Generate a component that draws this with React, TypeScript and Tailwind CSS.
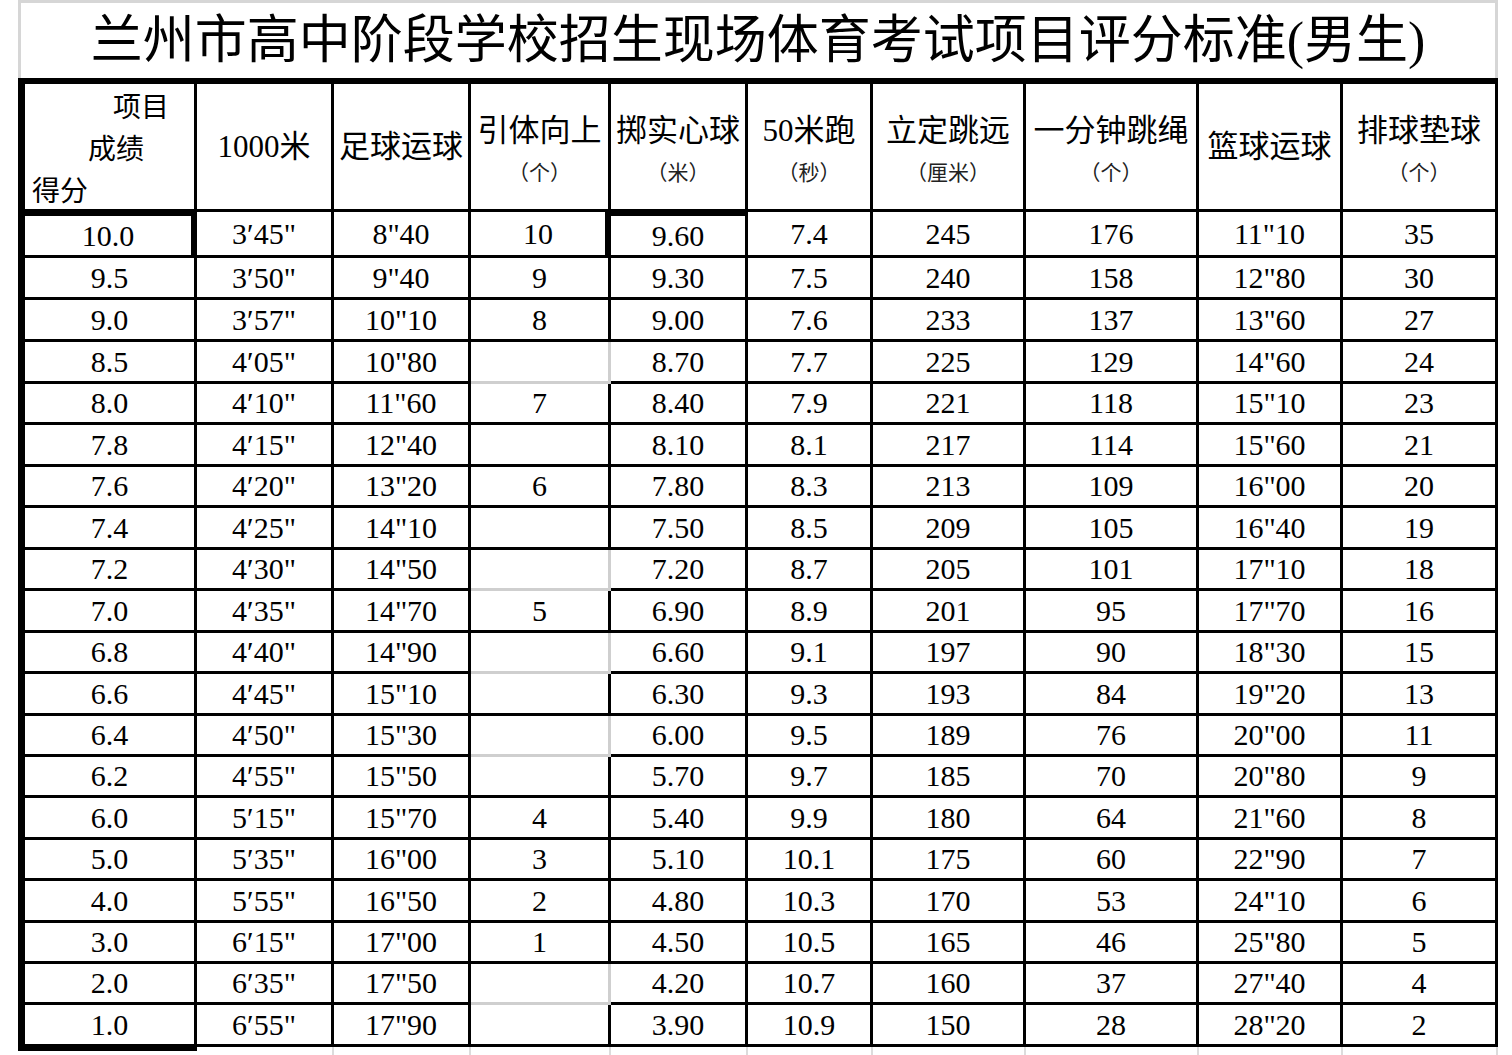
import React from 'react'
import clsx from 'clsx'

const colW = [
  'w-[172px]', 'w-[137px]', 'w-[137px]', 'w-[140px]', 'w-[137px]',
  'w-[125px]', 'w-[153px]', 'w-[173px]', 'w-[144px]', 'w-[155px]',
]

// heights of rows 9.5 ... 1.0
const rowH = [
  'h-[42px]', 'h-[42px]', 'h-[42px]', 'h-[41px]', 'h-[42px]', 'h-[41px]', 'h-[42px]',
  'h-[41px]', 'h-[42px]', 'h-[41px]', 'h-[42px]', 'h-[41px]', 'h-[41px]', 'h-[42px]',
  'h-[41px]', 'h-[42px]', 'h-[41px]', 'h-[41px]', 'h-[42px]',
]

// rows where the empty 引体向上 cell shows the light grid line
const greyRows = [3, 8, 10, 12, 18]

const heads: { main: string; sub?: string }[] = [
  { main: '1000米' },
  { main: '足球运球' },
  { main: '引体向上', sub: '（个）' },
  { main: '掷实心球', sub: '（米）' },
  { main: '50米跑', sub: '（秒）' },
  { main: '立定跳远', sub: '（厘米）' },
  { main: '一分钟跳绳', sub: '（个）' },
  { main: '篮球运球' },
  { main: '排球垫球', sub: '（个）' },
]

const rows = [
  ['10.0', '3′45"', '8"40', '10', '9.60', '7.4', '245', '176', '11"10', '35'],
  ['9.5', '3′50"', '9"40', '9', '9.30', '7.5', '240', '158', '12"80', '30'],
  ['9.0', '3′57"', '10"10', '8', '9.00', '7.6', '233', '137', '13"60', '27'],
  ['8.5', '4′05"', '10"80', '', '8.70', '7.7', '225', '129', '14"60', '24'],
  ['8.0', '4′10"', '11"60', '7', '8.40', '7.9', '221', '118', '15"10', '23'],
  ['7.8', '4′15"', '12"40', '', '8.10', '8.1', '217', '114', '15"60', '21'],
  ['7.6', '4′20"', '13"20', '6', '7.80', '8.3', '213', '109', '16"00', '20'],
  ['7.4', '4′25"', '14"10', '', '7.50', '8.5', '209', '105', '16"40', '19'],
  ['7.2', '4′30"', '14"50', '', '7.20', '8.7', '205', '101', '17"10', '18'],
  ['7.0', '4′35"', '14"70', '5', '6.90', '8.9', '201', '95', '17"70', '16'],
  ['6.8', '4′40"', '14"90', '', '6.60', '9.1', '197', '90', '18"30', '15'],
  ['6.6', '4′45"', '15"10', '', '6.30', '9.3', '193', '84', '19"20', '13'],
  ['6.4', '4′50"', '15"30', '', '6.00', '9.5', '189', '76', '20"00', '11'],
  ['6.2', '4′55"', '15"50', '', '5.70', '9.7', '185', '70', '20"80', '9'],
  ['6.0', '5′15"', '15"70', '4', '5.40', '9.9', '180', '64', '21"60', '8'],
  ['5.0', '5′35"', '16"00', '3', '5.10', '10.1', '175', '60', '22"90', '7'],
  ['4.0', '5′55"', '16"50', '2', '4.80', '10.3', '170', '53', '24"10', '6'],
  ['3.0', '6′15"', '17"00', '1', '4.50', '10.5', '165', '46', '25"80', '5'],
  ['2.0', '6′35"', '17"50', '', '4.20', '10.7', '160', '37', '27"40', '4'],
  ['1.0', '6′55"', '17"90', '', '3.90', '10.9', '150', '28', '28"20', '2'],
]

const HeaderRow = () => (
  <div className="flex h-[128px]">
    <div className={clsx(colW[0], 'flex flex-col border-r-[3px] border-b-[3px] border-black text-[28px] leading-[42px]')}>
      <span className="pl-[88px]">项目</span>
      <span className="pl-[63px]">成绩</span>
      <span className="pl-[7px]">得分</span>
    </div>
    {heads.map((h, i) => (
      <div
        key={h.main}
        className={clsx(
          colW[i + 1],
          'flex flex-col items-center border-r-[3px] border-b-[3px] border-black',
          h.sub ? 'pt-[27px]' : 'justify-center'
        )}
      >
        <span className="text-[31px] leading-[40px] whitespace-nowrap font-['Liberation_Serif','Noto_Sans_CJK_SC',sans-serif]">
          {h.main}
        </span>
        {h.sub && <span className="text-[21px] leading-[40px] text-[#222]">{h.sub}</span>}
      </div>
    ))}
  </div>
)

export default function App() {
  return (
    <div className="w-[1512px] h-[1055px] bg-white overflow-hidden text-black font-['Noto_Sans_CJK_SC',sans-serif]">
      <div className="ml-[18px] w-[1480px]">
        <div className="h-[78px] border-t-[3px] border-x-[3px] border-[#d6d6d6] flex items-center justify-center">
          <h1 className="text-[52px] leading-none whitespace-nowrap font-['Liberation_Serif','Noto_Sans_CJK_SC',sans-serif]">
            兰州市高中阶段学校招生现场体育考试项目评分标准(男生)
          </h1>
        </div>

        <div className="border-l-[7px] border-t-[6px] border-black">
          <HeaderRow />
          {rows.map((r, ri) => (
            <div key={r[0]} className={clsx('flex', ri === 0 ? 'h-[46px]' : rowH[ri - 1])}>
              {r.map((v, ci) => {
                const grey = ci === 3 && greyRows.includes(ri)
                return (
                  <div
                    key={ci}
                    className={clsx(
                      colW[ci],
                      'flex items-center justify-center border-b-[3px] text-[30px] leading-none',
                      "font-['Liberation_Serif',serif]",
                      grey ? 'border-[#cfcfcf]' : 'border-black',
                      ri === 0 && (ci === 0 || ci === 3) ? 'border-r-[6px]' : 'border-r-[3px]',
                      ri === 0 && (ci === 0 || ci === 4) && 'border-t-[4px]'
                    )}
                  >
                    {v}
                  </div>
                )
              })}
            </div>
          ))}
        </div>

        <div className="flex h-[8px]">
          <div className="w-[179px] h-[4px] bg-black" />
          {colW.slice(1).map((w, i) => (
            <div key={i} className={clsx(w, 'border-r-[2px] border-[#dcdcdc]')} />
          ))}
        </div>
      </div>
    </div>
  )
}
